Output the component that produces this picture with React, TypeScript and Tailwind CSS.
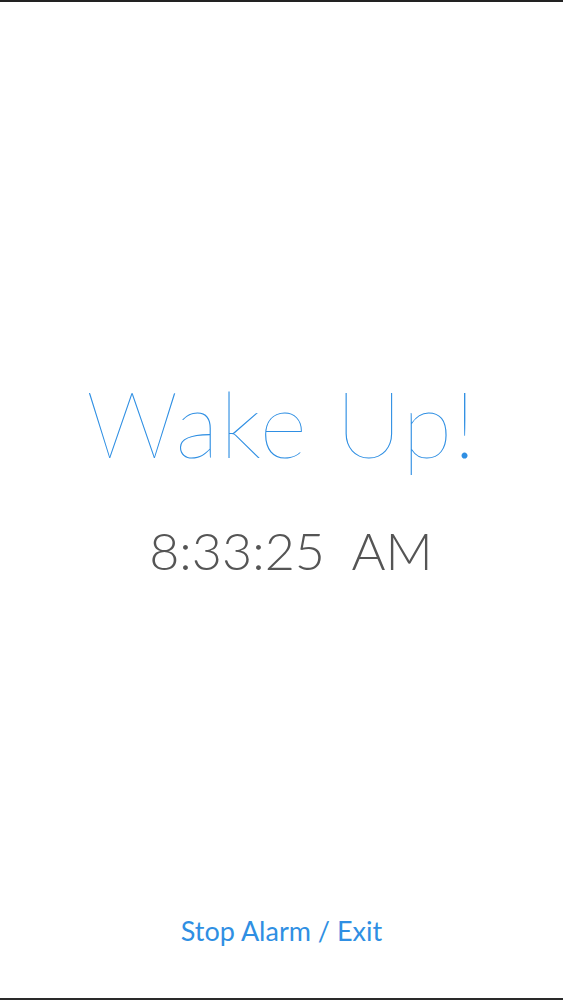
export default function App() {
  return (
    <div
      className="flex h-[1000px] w-full flex-col border-t-2 border-b-2 border-t-[#222] border-b-[#2a2a2a] bg-white"
      style={{ fontFamily: "Lato, 'Noto Sans', sans-serif" }}
    >
      <div className="flex flex-1 flex-col items-center pt-[375px]">
        <h1 className="text-[92px] font-thin leading-none tracking-[1.3px] text-[#2f8fe3]">
          Wake Up!
        </h1>
        <div className="mt-[55px] pl-[19px] text-[52px] font-light leading-none text-[#555555]">
          8:33:25&nbsp;&nbsp;AM
        </div>
      </div>
      <div className="flex justify-center pb-[54px]">
        <button className="text-[27px] font-normal leading-none text-[#2f8fe3]">
          Stop Alarm / Exit
        </button>
      </div>
    </div>
  );
}
